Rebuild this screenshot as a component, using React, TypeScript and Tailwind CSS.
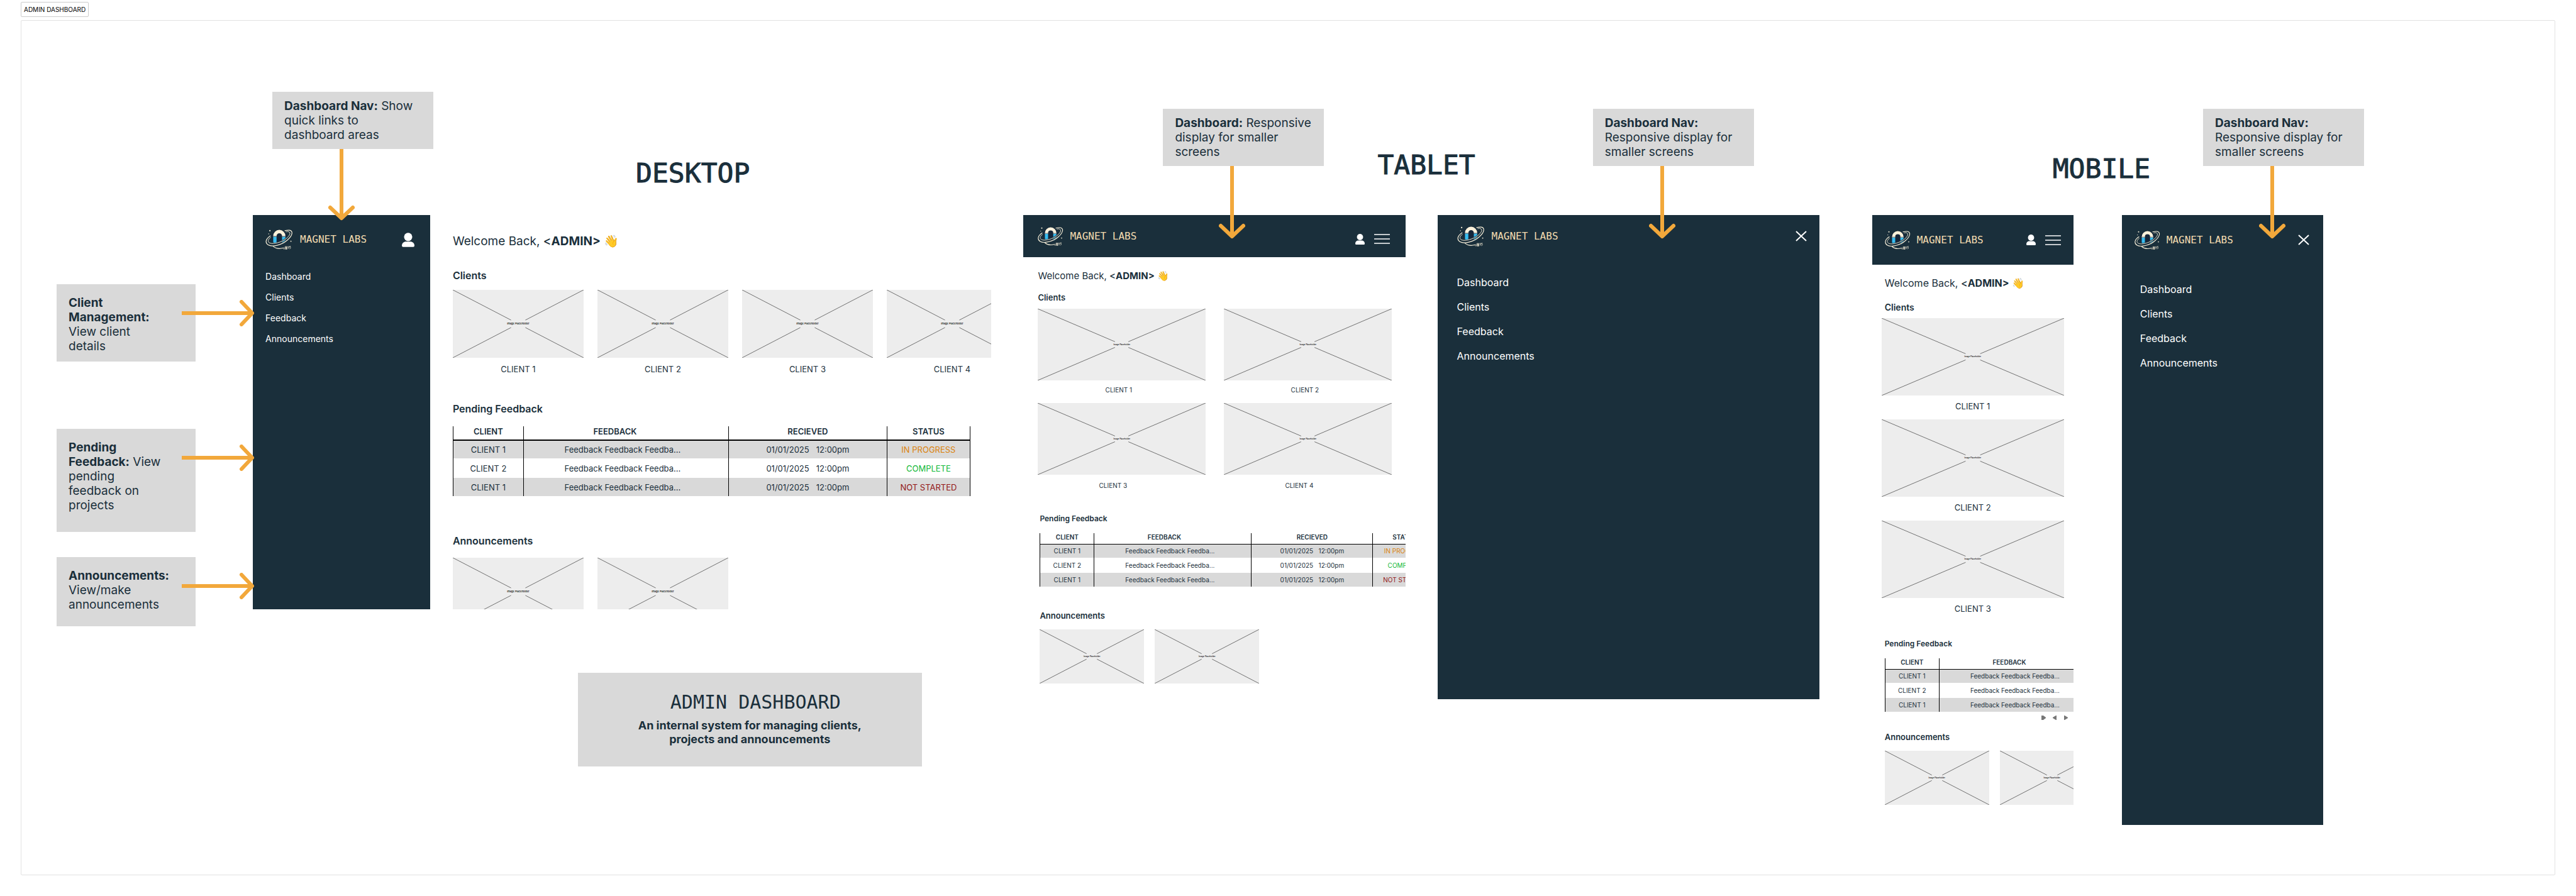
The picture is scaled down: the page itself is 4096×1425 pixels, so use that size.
import type { ReactNode } from "react";

const navItems = ["Dashboard", "Clients", "Feedback", "Announcements"];

const feedbackRows = [
  { client: "CLIENT 1", status: "IN PROGRESS", tone: "text-[#db820c]" },
  { client: "CLIENT 2", status: "COMPLETE", tone: "text-[#10b838]" },
  { client: "CLIENT 1", status: "NOT STARTED", tone: "text-[#931515]" },
];

function Arrow({ length, horizontal = false }: { length: number; horizontal?: boolean }) {
  const tip = length - 4;
  return horizontal ? (
    <svg width={length} height="42" fill="none" stroke="#f2a83b" strokeWidth="6" aria-hidden="true" className="block">
      <path d={`M0 21H${tip}`} />
      <path d={`M${tip - 17} 3L${tip} 21L${tip - 17} 39`} strokeLinecap="round" strokeLinejoin="round" />
    </svg>
  ) : (
    <svg width="42" height={length} fill="none" stroke="#f2a83b" strokeWidth="6" aria-hidden="true" className="block">
      <path d={`M21 0V${tip}`} />
      <path d={`M3 ${tip - 17}L21 ${tip}L39 ${tip - 17}`} strokeLinecap="round" strokeLinejoin="round" />
    </svg>
  );
}

function TopNote({ children, arrow, className = "" }: { children: ReactNode; arrow: number; className?: string }) {
  return (
    <aside className={`relative z-10 w-[256px] shrink-0 bg-[#d9d9d9] px-[19px] py-[11px] text-[19px] leading-[23px] ${className}`}>
      {children}
      <span className="absolute top-full left-[89px]">
        <Arrow length={arrow} />
      </span>
    </aside>
  );
}

function SideNote({ children, className }: { children: ReactNode; className: string }) {
  return (
    <aside className={`relative z-10 bg-[#d9d9d9] pt-[18px] pl-[19px] text-[19px] leading-[23px] ${className}`}>
      {children}
      <span className="absolute top-[25px] left-[199px]">
        <Arrow length={116} horizontal />
      </span>
    </aside>
  );
}

function BoardTitle({ children, className }: { children: ReactNode; className: string }) {
  return (
    <h2
      className={`font-['DejaVu_Sans_Mono',monospace] text-[43px] leading-[44px] [-webkit-text-stroke:1px_#1a2f3b] ${className}`}
    >
      {children}
    </h2>
  );
}

function LogoMark({ className }: { className: string }) {
  return (
    <svg viewBox="20 46 164 128" className={className} fill="none" aria-hidden="true">
      <circle cx="103" cy="98" r="46" fill="#16263a" />
      <path d="M142 56C156 50 178 52 179 68" stroke="#f7efd9" strokeWidth="4" />
      <path d="M66 90V88A36.500 36 0 0 1 139 88V90H119V88A16.500 16 0 0 0 86 88V90Z" fill="#fbf1da" />
      <path d="M66 88H86V94H66ZM119 88H139V94H119Z" fill="#8a9698" />
      <path d="M66 94H86V130H72Q66 130 66 124ZM119 94H139V124Q132 136 119 138Z" fill="#37bdf0" />
      <path d="M48 88C20 106 16 130 36 142C62 157 122 140 152 112C184 84 186 58 162 54C152 53 144 55 136 59" stroke="#1a2f3b" strokeWidth="10" />
      <path d="M50 96C34 110 30 124 46 131C68 140 116 126 144 104C168 84 172 68 158 63" stroke="#1a2f3b" strokeWidth="9" />
      <path d="M48 88C20 106 16 130 36 142C62 157 122 140 152 112C184 84 186 58 162 54C152 53 144 55 136 57" stroke="#f7efd9" strokeWidth="4.500" strokeLinecap="round" />
      <path d="M50 97C34 110 30 124 46 131C68 140 116 126 144 104C168 84 172 68 158 63C152 61 148 62 143 64" stroke="#f7efd9" strokeWidth="3.500" strokeLinecap="round" />
      <path d="M66 151C82 164 102 167 124 161" stroke="#f7efd9" strokeWidth="4.500" strokeLinecap="round" />
      <path d="M126 158L129 169M131 156L134 168M137 152H149V168H139Z" stroke="#d8d3c2" strokeWidth="3" />
      <path d="M140 153H147V166H141Z" fill="#d8d3c2" />
      <path d="M154 150L158 166M160 149L161 158L168 148L170 162L163 166" stroke="#d8d3c2" strokeWidth="3" />
      <circle cx="46" cy="57" r="4" fill="#f7efd9" />
      <circle cx="39" cy="76" r="2.500" fill="#f7efd9" />
      <circle cx="172" cy="120" r="3.500" fill="#f7efd9" />
    </svg>
  );
}

function Brand({ small = false }: { small?: boolean }) {
  return (
    <a href="#home" className={small ? "flex items-center gap-[10px]" : "flex items-center gap-[11px]"}>
      <LogoMark className={small ? "h-[32px] w-[41px]" : "h-[34px] w-[44px]"} />
      <span className="font-['DejaVu_Sans_Mono',monospace] text-[16px] leading-[20px] whitespace-nowrap text-[#f3dcb0]">
        MAGNET LABS
      </span>
    </a>
  );
}

function UserButton({ className }: { className: string }) {
  return (
    <button type="button" aria-label="Account" className="block">
      <svg viewBox="0 0 25 28" className={className} fill="#ffffff">
        <circle cx="12.500" cy="8.200" r="8.200" />
        <path d="M0 25.500C0 20.500 4 17.500 8 17.500H17C21 17.500 25 20.500 25 25.500Q25 28 22.500 28H2.500Q0 28 0 25.500Z" />
      </svg>
    </button>
  );
}

function MenuButton() {
  return (
    <button type="button" aria-label="Open menu" className="block">
      <svg width="25" height="16" stroke="#ffffff" strokeWidth="1.600">
        <path d="M0 1H25M0 8H25M0 15H25" />
      </svg>
    </button>
  );
}

function CloseButton() {
  return (
    <button type="button" aria-label="Close menu" className="block">
      <svg width="18" height="17" stroke="#ffffff" strokeWidth="2">
        <path d="M1 1L17 16M17 1L1 16" />
      </svg>
    </button>
  );
}

function NavLinks({ className, itemClass }: { className: string; itemClass: string }) {
  return (
    <nav>
      <ul className={`text-white ${className}`}>
        {navItems.map((item) => (
          <li key={item} className={itemClass}>
            <a href={`#${item.toLowerCase()}`}>{item}</a>
          </li>
        ))}
      </ul>
    </nav>
  );
}

function Placeholder({ className, label = "text-[3px]", near = 46, far = 54 }: { className: string; label?: string; near?: number; far?: number }) {
  return (
    <div className={`relative grid shrink-0 place-items-center bg-[#ededed] ${className}`}>
      <svg viewBox="0 0 100 100" preserveAspectRatio="none" className="absolute inset-0 h-full w-full" stroke="#707070" aria-hidden="true">
        <path
          vectorEffect="non-scaling-stroke"
          d={`M0 0L${near} ${near}M100 0L${far} ${near}M0 100L${near} ${far}M100 100L${far} ${far}`}
        />
      </svg>
      <span className={`relative leading-none font-medium text-black ${label}`}>Image Placeholder</span>
    </div>
  );
}

function Welcome({ className }: { className: string }) {
  return (
    <h3 className={`whitespace-nowrap ${className}`}>
      Welcome Back, <span className="font-medium">&lt;</span>
      <b className="font-bold">ADMIN&gt;</b> 👋
    </h3>
  );
}

function FeedbackTable({ large = false, columns = 4 }: { large?: boolean; columns?: number }) {
  const edge = "border-l border-black p-0";
  return (
    <table
      className={
        large
          ? "w-[823px] table-fixed border-collapse border-r border-black text-center text-[13px] leading-[16px]"
          : `table-fixed border-collapse text-center text-[10px] leading-[12px] ${columns === 4 ? "w-[631px]" : "w-[336px]"}`
      }
    >
      <colgroup>
        <col className={large ? "w-[112px]" : "w-[86px]"} />
        <col className={large ? "w-[326px]" : "w-[250px]"} />
        {columns > 2 && <col className={large ? "w-[252px]" : "w-[193px]"} />}
        {columns > 2 && <col />}
      </colgroup>
      <thead>
        <tr className={large ? "h-[22px] border-b-2 border-black align-top" : "h-[17px] border-b border-black align-top"}>
          <th className={`${edge} font-semibold`}>CLIENT</th>
          <th className={`${edge} font-semibold ${large ? "pr-[35px]" : "pr-[27px]"}`}>FEEDBACK</th>
          {columns > 2 && <th className={`${edge} font-semibold`}>RECIEVED</th>}
          {columns > 2 && <th className={`${edge} font-semibold`}>STATUS</th>}
        </tr>
      </thead>
      <tbody>
        {feedbackRows.map((row, i) => (
          <tr
            key={i}
            className={
              i === 1
                ? large ? "h-[31px]" : "h-[24px]"
                : large ? "h-[29px] bg-[#d9d9d9]" : "h-[22px] bg-[#d9d9d9]"
            }
          >
            <td className={edge}>{row.client}</td>
            <td className={`${edge} ${large ? "pr-[11px]" : "pr-[9px]"}`}>Feedback Feedback Feedba...</td>
            {columns > 2 && <td className={`${edge} whitespace-pre`}>{"01/01/2025   12:00pm"}</td>}
            {columns > 2 && <td className={`${edge} ${row.tone}`}>{row.status}</td>}
          </tr>
        ))}
      </tbody>
    </table>
  );
}

function DesktopBoard() {
  return (
    <article className="flex h-[627px] overflow-hidden">
      <div className="w-[24%] shrink-0 bg-[#1a2f3b]">
        <header className="flex items-center justify-between pt-[22px] pr-[25px] pl-[20px]">
          <Brand />
          <UserButton className="h-[23px] w-[20px]" />
        </header>
        <NavLinks className="pt-[25px] pl-[20px] text-[14px]" itemClass="leading-[33px]" />
      </div>
      <div className="min-w-0 flex-1 pt-[30px] pl-[36px]">
        <Welcome className="text-[19px] leading-[24px]" />
        <h4 className="mt-[32px] text-[16px] leading-[20px] font-semibold">Clients</h4>
        <div className="mt-[13px] flex gap-[22px]">
          {[1, 2, 3, 4].map((n) => (
            <figure key={n} className="shrink-0">
              <Placeholder className="h-[108px] w-[208px]" label="text-[4px]" near={44.5} far={55.5} />
              <figcaption className="mt-[10px] text-center text-[13px] leading-[16px]">CLIENT {n}</figcaption>
            </figure>
          ))}
        </div>
        <h4 className="mt-[45px] text-[16px] leading-[20px] font-semibold">Pending Feedback</h4>
        <div className="mt-[18px]">
          <FeedbackTable large />
        </div>
        <h4 className="mt-[61px] text-[16px] leading-[20px] font-semibold">Announcements</h4>
        <div className="mt-[17px] flex gap-[22px]">
          {[1, 2].map((n) => (
            <Placeholder key={n} className="h-[108px] w-[208px]" label="text-[4px]" near={44.5} far={55.5} />
          ))}
        </div>
      </div>
    </article>
  );
}

function TabletBoard() {
  return (
    <article className="overflow-hidden">
      <header className="flex h-[67px] items-center justify-between bg-[#1a2f3b] pr-[25px] pl-[23px]">
        <Brand small />
        <div className="flex items-center gap-[15px] pt-[9px]">
          <UserButton className="h-[17px] w-[15px]" />
          <MenuButton />
        </div>
      </header>
      <div className="pt-[20px] pl-[23px]">
        <Welcome className="text-[15px] leading-[20px]" />
        <h4 className="mt-[16px] text-[13px] leading-[16px] font-semibold">Clients</h4>
        <div className="mt-[10px] flex gap-[29px]">
          {[1, 2].map((n) => (
            <figure key={n} className="w-[267px] shrink-0">
              <Placeholder className="h-[114px]" />
              <figcaption className="mt-[9px] pr-[10px] text-center text-[10px] leading-[12px]">CLIENT {n}</figcaption>
            </figure>
          ))}
        </div>
        <div className="mt-[15px] flex gap-[29px]">
          {[3, 4].map((n) => (
            <figure key={n} className="w-[267px] shrink-0">
              <Placeholder className="h-[114px]" />
              <figcaption className="mt-[11px] pr-[28px] text-center text-[10px] leading-[12px]">CLIENT {n}</figcaption>
            </figure>
          ))}
        </div>
        <div className="pl-[3px]">
          <h4 className="mt-[39px] text-[12px] leading-[16px] font-semibold">Pending Feedback</h4>
          <div className="mt-[15px]">
            <FeedbackTable />
          </div>
          <h4 className="mt-[38px] text-[13px] leading-[16px] font-semibold">Announcements</h4>
          <div className="mt-[14px] flex gap-[17px]">
            <Placeholder className="h-[86px] w-[166px]" near={45} far={55} />
            <Placeholder className="h-[86px] w-[166px]" near={45} far={55} />
          </div>
        </div>
      </div>
    </article>
  );
}

function MobileBoard() {
  return (
    <article className="overflow-hidden">
      <header className="flex h-[79px] items-center justify-between bg-[#1a2f3b] pr-[20px] pl-[20px]">
        <Brand small />
        <div className="flex items-center gap-[15px]">
          <UserButton className="h-[17px] w-[15px]" />
          <MenuButton />
        </div>
      </header>
      <div className="pt-[19px]">
        <Welcome className="pl-[20px] text-[16px] leading-[20px]" />
        <h4 className="mt-[20px] pl-[20px] text-[14px] leading-[18px] font-semibold">Clients</h4>
        <div className="mt-[8px] flex flex-col gap-[13px] px-[15px]">
          {[1, 2, 3].map((n) => (
            <figure key={n}>
              <Placeholder className="h-[123px]" />
              <figcaption className="mt-[9px] text-center text-[13px] leading-[16px]">CLIENT {n}</figcaption>
            </figure>
          ))}
        </div>
        <div className="pl-[20px]">
          <h4 className="mt-[40px] text-[12px] leading-[16px] font-semibold">Pending Feedback</h4>
          <div className="mt-[15px]">
            <FeedbackTable columns={2} />
          </div>
          <div className="mt-[6px] flex justify-end gap-[11px] pr-[8px]">
            <button type="button" aria-label="Last page" className="block">
              <svg width="7" height="7" fill="#777777"><path d="M0 0H3L7 3V4L3 7H0Z" /></svg>
            </button>
            <button type="button" aria-label="Previous page" className="block">
              <svg width="7" height="7" fill="#777777"><path d="M6 0V7H5L0 4V3L5 0Z" /></svg>
            </button>
            <button type="button" aria-label="Next page" className="block">
              <svg width="7" height="7" fill="#777777"><path d="M0 0V7H1L6 4V3L1 0Z" /></svg>
            </button>
          </div>
          <h4 className="mt-[19px] text-[13px] leading-[16px] font-semibold">Announcements</h4>
          <div className="mt-[14px] flex gap-[17px]">
            <Placeholder className="h-[86px] w-[166px]" near={45} far={55} />
            <Placeholder className="h-[86px] w-[166px]" near={45} far={55} />
          </div>
        </div>
      </div>
    </article>
  );
}

export default function App() {
  return (
    <main className="flex min-h-screen flex-col items-stretch bg-white px-[33px] pt-[3px] pb-[33px] font-['Inter',sans-serif] text-[#1a2f3b]">
      <h1 className="self-start rounded-[2px] border border-[#cccccc] px-[4px] text-[10px] leading-[22px] whitespace-nowrap text-black">
        ADMIN DASHBOARD
      </h1>
      <section className="mt-[5px] flex-1 overflow-hidden rounded-[2px] border border-[#e2e2e2] pl-[56px]">
        <div className="grid grid-cols-[221fr_91fr_1174fr_51fr_607fr_51fr_607fr_84fr_320fr_77fr_320fr_368fr] grid-rows-[309px_auto] items-start">
          <div className="col-start-3 row-start-1 flex min-w-0 items-start pl-[31px]">
            <TopNote className="mt-[113px]" arrow={114}>
              <b>Dashboard Nav:</b> Show
              <br />
              quick links to
              <br />
              dashboard areas
            </TopNote>
            <BoardTitle className="mt-[220px] ml-[322px]">DESKTOP</BoardTitle>
          </div>
          <div className="col-span-3 col-start-5 row-start-1 flex min-w-0 items-start pl-[222px]">
            <TopNote className="mt-[140px]" arrow={116}>
              <b>Dashboard:</b> Responsive
              <br />
              display for smaller
              <br />
              screens
            </TopNote>
            <BoardTitle className="mt-[207px] ml-[85px]">TABLET</BoardTitle>
            <TopNote className="mt-[140px] ml-[187px]" arrow={116}>
              <b>Dashboard Nav:</b>
              <br />
              Responsive display for
              <br />
              smaller screens
            </TopNote>
          </div>
          <div className="col-span-4 col-start-9 row-start-1 flex min-w-0 items-start pl-[287px]">
            <BoardTitle className="mt-[213px]">MOBILE</BoardTitle>
            <TopNote className="mt-[140px] ml-[84px]" arrow={116}>
              <b>Dashboard Nav:</b>
              <br />
              Responsive display for
              <br />
              smaller screens
            </TopNote>
          </div>

          <div className="col-start-1 row-start-2 min-w-0 pt-[110px]">
            <SideNote className="min-h-[123px]">
              <b>
                Client
                <br />
                Management:
              </b>
              <br />
              View client
              <br />
              details
            </SideNote>
            <SideNote className="mt-[107px] min-h-[164px]">
              <b>
                Pending
                <br />
                Feedback:
              </b>{" "}
              View
              <br />
              pending
              <br />
              feedback on
              <br />
              projects
            </SideNote>
            <SideNote className="mt-[40px] min-h-[110px]">
              <b>Announcements:</b>
              <br />
              View/make
              <br />
              announcements
            </SideNote>
          </div>

          <div className="col-start-3 row-start-2 min-w-0">
            <DesktopBoard />
            <div className="mt-[101px] ml-[44%] min-h-[149px] w-[547px] bg-[#d9d9d9] pt-[29px] text-center">
              <h2 className="pl-[18px] font-['DejaVu_Sans_Mono',monospace] text-[30px] leading-[36px]">ADMIN DASHBOARD</h2>
              <p className="mt-[8px] text-[18px] leading-[22px] font-bold">
                An internal system for managing clients,
                <br />
                projects and announcements
              </p>
            </div>
          </div>

          <div className="col-start-5 row-start-2 min-w-0">
            <TabletBoard />
          </div>

          <article className="col-start-7 row-start-2 min-h-[770px] min-w-0 bg-[#1a2f3b]">
            <header className="flex h-[67px] items-center justify-between pr-[20px] pl-[31px]">
              <Brand />
              <CloseButton />
            </header>
            <NavLinks className="pt-[21px] pl-[31px] text-[16px]" itemClass="leading-[39px]" />
          </article>

          <div className="col-start-9 row-start-2 min-w-0">
            <MobileBoard />
          </div>

          <article className="col-start-11 row-start-2 min-h-[970px] min-w-0 bg-[#1a2f3b]">
            <header className="flex h-[79px] items-center justify-between pr-[22px] pl-[20px]">
              <Brand small />
              <CloseButton />
            </header>
            <NavLinks className="pt-[20px] pl-[29px] text-[16px]" itemClass="leading-[39px]" />
          </article>
        </div>
      </section>
    </main>
  );
}
